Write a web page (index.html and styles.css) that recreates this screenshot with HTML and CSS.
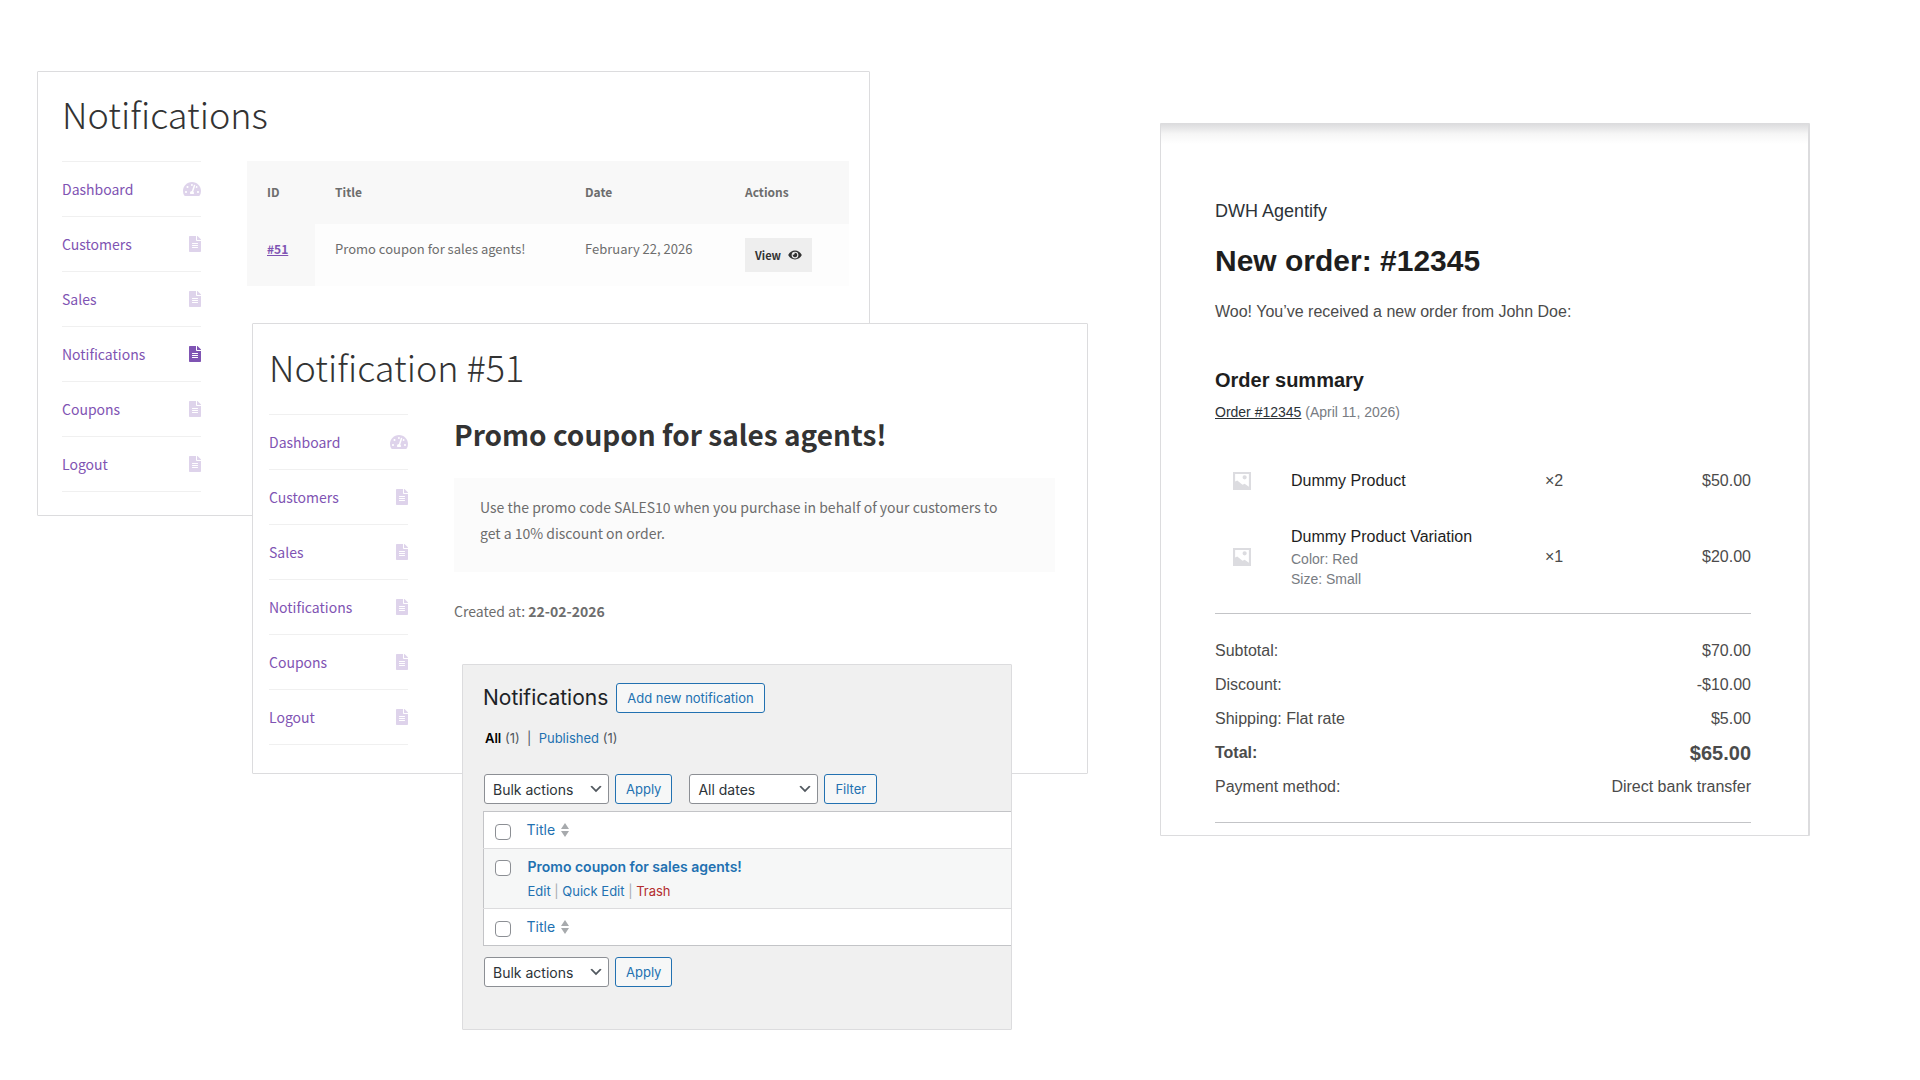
FILE: index.html
```html
<!DOCTYPE html>
<html lang="en">
<head>
    <meta charset="UTF-8">
    <meta name="viewport" content="width=device-width, initial-scale=1.0">
    <title>Agentify notifications</title>
    <link rel="stylesheet" href="styles.css">
</head>
<body>
    <!-- shared icons -->
    <svg class="icon-defs" aria-hidden="true">
        <symbol id="icon-gauge" viewBox="0 0 576 512"><path d="M288 32C128.94 32 0 160.94 0 320c0 52.8 14.25 102.26 39.06 144.8 5.61 9.62 16.3 15.2 27.44 15.2h443c11.14 0 21.83-5.58 27.44-15.2C561.75 422.26 576 372.8 576 320c0-159.06-128.94-288-288-288zm0 64c14.71 0 26.58 10.13 30.32 23.65-1.11 2.26-2.64 4.23-3.45 6.67l-9.22 27.67c-5.13 3.49-10.97 6.01-17.64 6.01-17.67 0-32-14.33-32-32S270.33 96 288 96zM96 384c-17.67 0-32-14.33-32-32s14.33-32 32-32 32 14.33 32 32-14.33 32-32 32zm48-160c-17.67 0-32-14.33-32-32s14.33-32 32-32 32 14.33 32 32-14.33 32-32 32zm246.77-72.41l-61.33 184C343.13 347.33 352 364.54 352 384c0 11.72-3.38 22.55-8.88 32H232.88c-5.5-9.45-8.88-20.28-8.88-32 0-33.94 26.5-61.43 59.9-63.59l61.34-184.01c4.17-12.56 17.73-19.45 30.36-15.17 12.57 4.19 19.35 17.79 15.17 30.36zm14.66 57.2l15.52-46.55c3.47-1.29 7.13-2.23 11.05-2.23 17.67 0 32 14.33 32 32s-14.33 32-32 32c-11.38-.01-20.89-6.28-26.57-15.22zM480 384c-17.67 0-32-14.33-32-32s14.33-32 32-32 32 14.33 32 32-14.33 32-32 32z"/></symbol>
        <symbol id="icon-file" viewBox="0 0 384 512"><path d="M224 136V0H24C10.7 0 0 10.7 0 24v464c0 13.3 10.7 24 24 24h336c13.3 0 24-10.7 24-24V160H248c-13.2 0-24-10.8-24-24zm64 236c0 6.6-5.4 12-12 12H108c-6.6 0-12-5.4-12-12v-8c0-6.6 5.4-12 12-12h168c6.6 0 12 5.4 12 12v8zm0-64c0 6.6-5.4 12-12 12H108c-6.6 0-12-5.4-12-12v-8c0-6.6 5.4-12 12-12h168c6.6 0 12 5.4 12 12v8zm0-72v8c0 6.6-5.4 12-12 12H108c-6.6 0-12-5.4-12-12v-8c0-6.6 5.4-12 12-12h168c6.6 0 12 5.4 12 12zm96-114.1v6.1H256V0h6.1c6.4 0 12.5 2.5 17 7l97.9 98c4.5 4.5 7 10.6 7 16.9z"/></symbol>
        <symbol id="icon-eye" viewBox="0 0 576 512"><path d="M572.52 241.4C518.29 135.59 410.93 64 288 64S57.68 135.64 3.48 241.41a32.35 32.35 0 0 0 0 29.19C57.71 376.41 165.07 448 288 448s230.32-71.64 284.52-177.41a32.35 32.35 0 0 0 0-29.19zM288 400a144 144 0 1 1 144-144 143.93 143.93 0 0 1-144 144zm0-240a95.31 95.31 0 0 0-25.31 3.79 47.85 47.85 0 0 1-66.9 66.9A95.78 95.78 0 1 0 288 160z"/></symbol>
        <symbol id="icon-chevron" viewBox="0 0 20 20"><path d="M5 6l5 5 5-5 2 1-7 7-7-7 2-1z"/></symbol>
        <symbol id="icon-sort" viewBox="0 0 8 14"><path d="M4 0l4 6H0zM0 8h8l-4 6z"/></symbol>
        <symbol id="icon-image" viewBox="0 0 17 17"><path fill-rule="evenodd" d="M0 0h17v17H0zM2 2v7l2-1 5 4 2-1 4 3V2zM11 3a2 2 0 1 1 0 4 2 2 0 0 1 0-4z"/></symbol>
    </svg>

    <main class="board">
        <section class="panel panel-list">
            <h1 class="page-title">Notifications</h1>
            <div class="account">
                <nav class="account-nav">
                    <a href="#">Dashboard <svg class="icon-gauge"><use href="#icon-gauge"/></svg></a>
                    <a href="#">Customers <svg class="icon-file"><use href="#icon-file"/></svg></a>
                    <a href="#">Sales <svg class="icon-file"><use href="#icon-file"/></svg></a>
                    <a href="#" class="active">Notifications <svg class="icon-file"><use href="#icon-file"/></svg></a>
                    <a href="#">Coupons <svg class="icon-file"><use href="#icon-file"/></svg></a>
                    <a href="#">Logout <svg class="icon-file"><use href="#icon-file"/></svg></a>
                </nav>
                <table class="notification-table">
                    <thead>
                        <tr>
                            <th class="col-id">ID</th>
                            <th class="col-title">Title</th>
                            <th class="col-date">Date</th>
                            <th>Actions</th>
                        </tr>
                    </thead>
                    <tbody>
                        <tr>
                            <th><a href="#">#51</a></th>
                            <td>Promo coupon for sales agents!</td>
                            <td>February 22, 2026</td>
                            <td class="cell-action"><button type="button" class="view-button">View <svg><use href="#icon-eye"/></svg></button></td>
                        </tr>
                    </tbody>
                </table>
            </div>
        </section>

        <section class="panel panel-single">
            <h1 class="page-title">Notification #51</h1>
            <div class="account">
                <nav class="account-nav">
                    <a href="#">Dashboard <svg class="icon-gauge"><use href="#icon-gauge"/></svg></a>
                    <a href="#">Customers <svg class="icon-file"><use href="#icon-file"/></svg></a>
                    <a href="#">Sales <svg class="icon-file"><use href="#icon-file"/></svg></a>
                    <a href="#">Notifications <svg class="icon-file"><use href="#icon-file"/></svg></a>
                    <a href="#">Coupons <svg class="icon-file"><use href="#icon-file"/></svg></a>
                    <a href="#">Logout <svg class="icon-file"><use href="#icon-file"/></svg></a>
                </nav>
                <article class="notification">
                    <h2>Promo coupon for sales agents!</h2>
                    <div class="notification-text">Use the promo code SALES10 when you purchase in behalf of your customers to get a 10% discount on order.</div>
                    <p>Created at: <strong>22-02-2026</strong></p>
                </article>
            </div>
        </section>

        <section class="panel panel-admin">
            <div class="admin-head">
                <h1>Notifications</h1>
                <button type="button" class="admin-button">Add new notification</button>
            </div>
            <p class="admin-views"><a href="#" class="current">All</a> (1) &nbsp;|&nbsp; <a href="#">Published</a> (1)</p>
            <div class="admin-nav">
                <div class="select-box">
                    <select class="select-bulk" aria-label="Bulk actions">
                        <option>Bulk actions</option>
                    </select>
                    <svg><use href="#icon-chevron"/></svg>
                </div>
                <button type="button" class="admin-button">Apply</button>
                <div class="select-box filter-box">
                    <select class="select-date" aria-label="Filter by date">
                        <option>All dates</option>
                    </select>
                    <svg><use href="#icon-chevron"/></svg>
                </div>
                <button type="button" class="admin-button">Filter</button>
            </div>
            <table class="admin-table">
                <thead>
                    <tr>
                        <td class="col-check"><input type="checkbox" aria-label="Select all"></td>
                        <th><a href="#">Title <svg><use href="#icon-sort"/></svg></a></th>
                    </tr>
                </thead>
                <tbody>
                    <tr>
                        <td class="col-check"><input type="checkbox" aria-label="Select Promo coupon for sales agents!"></td>
                        <td class="cell-title">
                            <a href="#" class="row-title">Promo coupon for sales agents!</a>
                            <div class="row-actions"><a href="#">Edit</a> | <a href="#">Quick Edit</a> | <a href="#" class="trash">Trash</a></div>
                        </td>
                    </tr>
                </tbody>
                <tfoot>
                    <tr>
                        <td class="col-check"><input type="checkbox" aria-label="Select all"></td>
                        <th><a href="#">Title <svg><use href="#icon-sort"/></svg></a></th>
                    </tr>
                </tfoot>
            </table>
            <div class="admin-nav">
                <div class="select-box">
                    <select class="select-bulk" aria-label="Bulk actions">
                        <option>Bulk actions</option>
                    </select>
                    <svg><use href="#icon-chevron"/></svg>
                </div>
                <button type="button" class="admin-button">Apply</button>
            </div>
        </section>

        <section class="panel panel-email">
            <p class="email-shop">DWH Agentify</p>
            <h1>New order: #12345</h1>
            <p class="email-intro">Woo! You’ve received a new order from John Doe:</p>
            <h2>Order summary</h2>
            <p class="email-order"><a href="#">Order #12345</a> (April 11, 2026)</p>
            <table class="email-items">
                <tr>
                    <td class="item-image"><svg><use href="#icon-image"/></svg></td>
                    <td class="item-name">Dummy Product</td>
                    <td class="item-qty">×2</td>
                    <td class="item-price">$50.00</td>
                </tr>
                <tr>
                    <td class="item-image"><svg><use href="#icon-image"/></svg></td>
                    <td class="item-name">Dummy Product Variation
                        <div class="item-meta">Color: Red<br>Size: Small</div>
                    </td>
                    <td class="item-qty">×1</td>
                    <td class="item-price">$20.00</td>
                </tr>
            </table>
            <table class="email-totals">
                <tr><th>Subtotal:</th><td>$70.00</td></tr>
                <tr><th>Discount:</th><td>-$10.00</td></tr>
                <tr><th>Shipping: Flat rate</th><td>$5.00</td></tr>
                <tr class="total"><th>Total:</th><td>$65.00</td></tr>
                <tr><th>Payment method:</th><td>Direct bank transfer</td></tr>
            </table>
        </section>
    </main>
</body>
</html>
```
FILE: styles.css
```css
* {
    box-sizing: border-box;
}
body {
    margin: 0;
    background-color: #fff;
}
h1, h2, p {
    margin: 0;
}
table {
    width: 100%;
    border-collapse: collapse;
}
th, td {
    padding: 0;
    text-align: left;
}
svg {
    fill: currentColor;
}
.icon-defs {
    display: none;
}

/* overlapping panels share one grid row */
.board {
    display: grid;
    grid-template-columns: 37fr 215fr 210fr 408fr 142fr 76fr 72fr 650fr 110fr;
    align-items: start;
    min-height: 100vh;
}
.panel {
    grid-row: 1;
    min-width: 0;
    border: 1px solid #dcdcde;
    border-radius: 1px;
    background-color: #fff;
}

/* storefront account pages */
.panel-list, .panel-single {
    font-family: "Noto Sans CJK JP", sans-serif;
    color: #6d6d6d;
}
.panel-list {
    grid-column: 2 / 5;
    margin-top: 71px;
    padding: 11px 20px 23px 24px;
}
.panel-single {
    grid-column: 3 / 7;
    margin-top: 323px;
    padding: 12px 32px 28px 16px;
}
.page-title {
    font-size: 36px;
    line-height: 60px;
    font-weight: 300;
    color: #333;
    margin-bottom: 18px;
}
.account {
    display: flex;
    align-items: flex-start;
    gap: 46px;
}
.account-nav {
    flex: none;
    width: 139px;
    border-top: 1px solid #f0f0f0;
}
.account-nav a {
    display: flex;
    justify-content: space-between;
    align-items: center;
    height: 55px;
    padding-bottom: 1px;
    border-bottom: 1px solid #f0f0f0;
    font-size: 14px;
    color: #7f54b3;
    text-decoration: none;
}
.account-nav svg {
    height: 16px;
    opacity: 0.25;
}
.account-nav .active svg {
    opacity: 1;
}
.icon-gauge {
    width: 18px;
}
.icon-file {
    width: 12px;
}
.notification-table {
    flex: 1;
    table-layout: fixed;
    width: auto;
    font-size: 13px;
    line-height: 20px;
    background-color: #fdfdfd;
}
.notification-table th {
    background-color: #f8f8f8;
    font-size: 12px;
    font-weight: 700;
}
.notification-table th, .notification-table td {
    height: 62px;
    padding: 15px 0 0 20px;
    vertical-align: top;
}
.notification-table thead th {
    height: 63px;
    padding-top: 21px;
}
.notification-table .cell-action {
    padding-top: 14px;
}
.notification-table a {
    color: #7f54b3;
}
.col-id {
    width: 68px;
}
.col-title {
    width: 250px;
}
.col-date {
    width: 160px;
}
.view-button {
    display: flex;
    align-items: center;
    gap: 7px;
    height: 34px;
    padding: 0 10px;
    border: none;
    background-color: #eee;
    color: #333;
    font-family: inherit;
    font-size: 11px;
    font-weight: 700;
}
.view-button svg {
    width: 14px;
    height: 12px;
}
.notification {
    flex: 1;
    font-size: 14px;
    line-height: 26px;
}
.notification h2 {
    font-size: 28px;
    line-height: 40px;
    color: #333;
}
.notification-text {
    margin: 24px 0 26px;
    padding: 16px 40px 26px 26px;
    background-color: #fbfbfb;
}

/* wp-admin list */
.panel-admin {
    grid-column: 4 / 6;
    margin-top: 664px;
    padding: 18px 0 42px 20px;
    background-color: #f0f0f0;
    font-family: Inter, sans-serif;
    font-size: 13px;
    line-height: 20px;
    color: #50575e;
}
.panel-admin a {
    color: #2271b1;
    text-decoration: none;
}
.admin-head {
    display: flex;
    align-items: center;
    gap: 8px;
}
.admin-head h1 {
    font-size: 21px;
    line-height: 30px;
    font-weight: 400;
    color: #1d2327;
}
.admin-button {
    height: 30px;
    padding: 0 10px;
    border: 1px solid #2271b1;
    border-radius: 3px;
    background-color: #f6f7f7;
    color: #2271b1;
    font-family: inherit;
    font-size: 13px;
}
.admin-views {
    margin: 15px 0 26px 2px;
}
.admin-views .current {
    color: #000;
    font-weight: 600;
}
.admin-nav {
    display: flex;
    gap: 6px;
    margin-left: 1px;
}
.select-box {
    position: relative;
}
.select-box select {
    appearance: none;
    height: 30px;
    padding: 0 24px 0 8px;
    border: 1px solid #8c8f94;
    border-radius: 3px;
    background-color: #fff;
    color: #2c3338;
    font-family: inherit;
    font-size: 14px;
}
.select-box svg {
    position: absolute;
    top: 7px;
    right: 5px;
    width: 16px;
    height: 16px;
    color: #50575e;
    pointer-events: none;
}
.select-bulk {
    width: 125px;
}
.select-date {
    width: 129px;
}
.filter-box {
    margin-left: 11px;
}
.admin-table {
    margin: 7px 0 11px;
    border: 1px solid #c3c4c7;
    border-right: none;
    background-color: #fff;
}
.admin-table tr {
    height: 37px;
}
.admin-table th {
    font-size: 14px;
    font-weight: 400;
}
.admin-table th svg {
    width: 8px;
    height: 14px;
    margin-left: 2px;
    color: #a7aaad;
    vertical-align: -2px;
}
.admin-table tbody tr {
    height: 60px;
    border: 1px solid #dcdcde;
    border-width: 1px 0;
    background-color: #f6f7f7;
    vertical-align: top;
}
.col-check {
    width: 43px;
    padding-left: 11px;
}
.col-check input {
    appearance: none;
    display: block;
    width: 16px;
    height: 16px;
    margin: 3px 0 0;
    border: 1px solid #8c8f94;
    border-radius: 4px;
    background-color: #fff;
}
.admin-table tbody input {
    margin-top: 11px;
}
.cell-title {
    padding: 8px 0 0 1px;
}
.row-title {
    font-size: 14px;
    font-weight: 600;
}
.row-actions {
    padding-top: 4px;
    color: #a7aaad;
}
.row-actions .trash {
    color: #b32d2e;
}

/* order email */
.panel-email {
    grid-column: 8;
    margin-top: 123px;
    padding: 75px 57px 12px 54px;
    border-right: 2px solid #dcdcde;
    background-image: linear-gradient(#dcdcde, #f6f6f6 10px, #fff 20px);
    background-repeat: no-repeat;
    font-family: "Liberation Sans", Arial, sans-serif;
    font-size: 16px;
    line-height: 24px;
    color: #4b4b4b;
}
.email-shop {
    font-size: 18px;
    color: #2c3338;
}
.panel-email h1 {
    margin: 20px 0 21px;
    font-size: 30px;
    line-height: 36px;
    color: #1e1e1e;
}
.panel-email h2 {
    margin: 42px 0 8px;
    font-size: 20px;
    line-height: 28px;
    color: #1e1e1e;
}
.email-order {
    font-size: 14px;
    line-height: 20px;
    color: #787c82;
}
.email-order a {
    color: #2c3338;
}
.email-items {
    margin-top: 31px;
    border-bottom: 1px solid #c3c4c7;
}
.email-items td {
    padding: 16px 0;
}
.email-items tr:last-child td {
    padding-bottom: 24px;
}
.email-items .item-image {
    width: 76px;
    padding-left: 18px;
    color: #dcdce0;
}
.item-image svg {
    display: block;
    width: 18px;
    height: 18px;
}
.item-name {
    color: #1e1e1e;
}
.item-meta {
    font-size: 14px;
    line-height: 20px;
    color: #787c82;
}
.item-qty {
    width: 106px;
}
.item-price {
    width: 100px;
    text-align: right;
}
.email-totals {
    margin-top: 20px;
    border-bottom: 1px solid #c3c4c7;
}
.email-totals th {
    height: 34px;
    font-weight: 400;
}
.email-totals td {
    text-align: right;
}
.email-totals .total th, .email-totals .total td {
    font-weight: 700;
}
.email-totals .total td {
    font-size: 20px;
}
.email-totals tr:last-child th, .email-totals tr:last-child td {
    height: 52px;
    padding-bottom: 18px;
}
```
